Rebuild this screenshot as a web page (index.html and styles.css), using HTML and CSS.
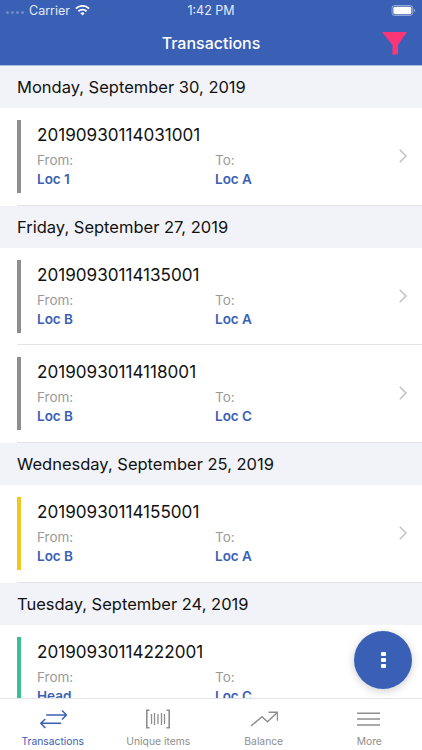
FILE: index.html
```html
<!DOCTYPE html>
<html lang="en">
<head>
<meta charset="utf-8">
<title>Transactions</title>
<link rel="stylesheet" href="styles.css">
</head>
<body>
<div class="app">
  <header class="top">
    <div class="status">
      <div class="status-left">
        <span class="dots"><i></i><i></i><i></i><i></i></span>
        <span>Carrier</span>
        <svg class="wifi" viewBox="0 0 18 13"><path d="M9 12.6 6.4 9.8a3.7 3.7 0 0 1 5.2 0zM4.9 8.3 3.3 6.6a8.1 8.1 0 0 1 11.4 0l-1.6 1.7a5.8 5.8 0 0 0-8.200 0zM1.800 5.100.3 3.400a12.400 12.400 0 0 1 17.400 0l-1.500 1.700a10.200 10.200 0 0 0-14.400 0z" fill="#fff"/></svg>
      </div>
      <span class="time">1:42 PM</span>
      <div class="status-right">
        <svg class="battery" viewBox="0 0 26 12"><rect x=".5" y=".5" width="22.500" height="11" rx="3" fill="none" stroke="#fff" stroke-opacity=".5"/><rect x="2" y="2" width="19.500" height="8" rx="1.500" fill="#fff"/><path d="M24.300 4v4c.8-.3 1.400-1.100 1.400-2s-.6-1.700-1.400-2z" fill="#fff" fill-opacity=".5"/></svg>
      </div>
    </div>
    <div class="nav">
      <h1>Transactions</h1>
      <svg class="filter" viewBox="0 0 25 23"><path d="M0 0H25L16 13V22L10.500 23V13Z" fill="#fb3576"/></svg>
    </div>
  </header>

  <main class="list">
    <h2 class="day">Monday, September 30, 2019</h2>
    <article class="row">
      <div class="bar grey"></div>
      <div class="info">
        <div class="num">20190930114031001</div>
        <div class="cols">
          <div class="col"><span class="lbl">From:</span><b>Loc 1</b></div>
          <div class="col"><span class="lbl">To:</span><b>Loc A</b></div>
        </div>
      </div>
      <svg class="chev" viewBox="0 0 8 14"><path d="M.7.7 7 7 .7 13.300" fill="none" stroke="#bfbfc3" stroke-width="1.400"/></svg>
    </article>

    <h2 class="day">Friday, September 27, 2019</h2>
    <article class="row">
      <div class="bar grey"></div>
      <div class="info">
        <div class="num">20190930114135001</div>
        <div class="cols">
          <div class="col"><span class="lbl">From:</span><b>Loc B</b></div>
          <div class="col"><span class="lbl">To:</span><b>Loc A</b></div>
        </div>
      </div>
      <svg class="chev" viewBox="0 0 8 14"><path d="M.7.7 7 7 .7 13.300" fill="none" stroke="#bfbfc3" stroke-width="1.400"/></svg>
    </article>
    <article class="row">
      <div class="bar grey"></div>
      <div class="info">
        <div class="num">20190930114118001</div>
        <div class="cols">
          <div class="col"><span class="lbl">From:</span><b>Loc B</b></div>
          <div class="col"><span class="lbl">To:</span><b>Loc C</b></div>
        </div>
      </div>
      <svg class="chev" viewBox="0 0 8 14"><path d="M.7.7 7 7 .7 13.300" fill="none" stroke="#bfbfc3" stroke-width="1.400"/></svg>
    </article>

    <h2 class="day">Wednesday, September 25, 2019</h2>
    <article class="row">
      <div class="bar yellow"></div>
      <div class="info">
        <div class="num">20190930114155001</div>
        <div class="cols">
          <div class="col"><span class="lbl">From:</span><b>Loc B</b></div>
          <div class="col"><span class="lbl">To:</span><b>Loc A</b></div>
        </div>
      </div>
      <svg class="chev" viewBox="0 0 8 14"><path d="M.7.7 7 7 .7 13.300" fill="none" stroke="#bfbfc3" stroke-width="1.400"/></svg>
    </article>

    <h2 class="day">Tuesday, September 24, 2019</h2>
    <article class="row">
      <div class="bar green"></div>
      <div class="info">
        <div class="num">20190930114222001</div>
        <div class="cols">
          <div class="col"><span class="lbl">From:</span><b>Head</b></div>
          <div class="col"><span class="lbl">To:</span><b>Loc C</b></div>
        </div>
      </div>
      <svg class="chev" viewBox="0 0 8 14"><path d="M.7.7 7 7 .7 13.300" fill="none" stroke="#bfbfc3" stroke-width="1.400"/></svg>
    </article>
  </main>

  <button class="fab" aria-label="Actions"><i></i><i></i><i></i></button>

  <nav class="tabs">
    <div class="tab active">
      <svg viewBox="0 0 28 24"><path d="M7.200 7H27.500M23 2.500 27.500 7 23 11.500M22.200 15.300H1.800M6.300 11 1.800 15.300 6.300 20" fill="none" stroke="#3a60b5" stroke-width="1.500"/></svg>
      <span>Transactions</span>
    </div>
    <div class="tab">
      <svg viewBox="0 0 28 24"><path d="M5.500 2.300H2.800V19.700H5.500M22.500 2.300H25.200V19.700H22.500" fill="none" stroke="#8e8e8e" stroke-width="1.600"/><path d="M7.500 6V16M10.500 5V17M14 6V16M17.500 5V17M20.500 6V16" fill="none" stroke="#8e8e8e" stroke-width="1.300"/></svg>
      <span>Unique items</span>
    </div>
    <div class="tab">
      <svg viewBox="0 0 28 24"><path d="M1 18 12 8.700 17.500 13.700 27.500 4.300M18.500 4.300H27.500V12.700" fill="none" stroke="#8e8e8e" stroke-width="1.500"/></svg>
      <span>Balance</span>
    </div>
    <div class="tab">
      <svg viewBox="0 0 28 24"><path d="M2 5.300H25M2 11H25M2 17H25" fill="none" stroke="#8e8e8e" stroke-width="1.600"/></svg>
      <span>More</span>
    </div>
  </nav>
</div>
</body>
</html>
```
FILE: styles.css
```css
* { box-sizing: border-box; }
html, body { margin: 0; padding: 0; }
body { font-family: Inter, "Liberation Sans", sans-serif; background: #fff; }
.app { position: relative; width: 422px; height: 750px; display: flex; flex-direction: column; overflow: hidden; }

.top { height: 66px; flex: none; background: #3a60b5; color: #fff; border-bottom: 1px solid #a9bbe0; }
.status { height: 21px; display: flex; align-items: center; justify-content: space-between; padding: 0 6px; font-size: 12.500px; }
.status-left { flex: 1; display: flex; align-items: center; gap: 5px; color: #e4eaf7; }
.status-right { flex: 1; display: flex; justify-content: flex-end; }
.dots { display: flex; gap: 2px; }
.dots i { width: 3px; height: 3px; border-radius: 50%; background: #6f8bcb; margin-top: 3px; }
.wifi { width: 15px; height: 11px; }
.time { color: #e4eaf7; }
.battery { width: 25px; height: 11px; }
.nav { height: 44px; display: flex; align-items: center; justify-content: center; position: relative; }
.nav h1 { margin: 0; font-size: 16px; font-weight: 500; }
.filter { position: absolute; right: 15px; top: 11px; width: 25px; height: 23px; }

.list { flex: 1; min-height: 0; overflow: hidden; background: #fff; }
.day { margin: 0; height: 42px; display: flex; align-items: center; padding: 0 17px; background: #f2f3f8; font-size: 16.500px; font-weight: 400; color: #111; }
.row { height: 97.670px; display: flex; align-items: flex-start; padding-top: 12px; margin-left: 17px; padding-right: 15px; border-bottom: 1px solid #e4e4e8; }
.bar { width: 4px; height: 73px; flex: none; }
.grey { background: #8e8e8e; }
.yellow { background: #f2c81e; }
.green { background: #3bbd98; }
.info { flex: 1; padding-left: 16px; }
.num { font-size: 17.100px; line-height: 20px; margin-top: 5px; color: #111; }
.cols { display: flex; margin-top: 6px; }
.col { width: 178px; display: flex; flex-direction: column; font-size: 13.500px; line-height: 19px; }
.lbl { color: #9a9a9a; }
.col b { color: #3a60b5; font-weight: 600; }
.chev { width: 8px; height: 14px; flex: none; margin-top: 29px; }

.fab { position: absolute; left: 354px; top: 631px; width: 58px; height: 58px; border: 0; padding: 0; border-radius: 50%; background: #3a60b5; box-shadow: 0 2px 8px rgba(0,0,0,.2); display: flex; flex-direction: column; align-items: center; justify-content: center; gap: 2px; }
.fab i { width: 5px; height: 4px; background: #fff; border-radius: 1px; }

.tabs { height: 52px; flex: none; display: flex; background: #fff; border-top: 1px solid #e4e4e8; }
.tab { width: 105.500px; display: flex; flex-direction: column; align-items: center; color: #8e8e8e; font-size: 10.300px; padding-top: 9px; position: relative; }
.tab svg { height: 24px; width: 28px; }
.tab span { position: absolute; top: 36px; }
.active { color: #3a60b5; }
```
